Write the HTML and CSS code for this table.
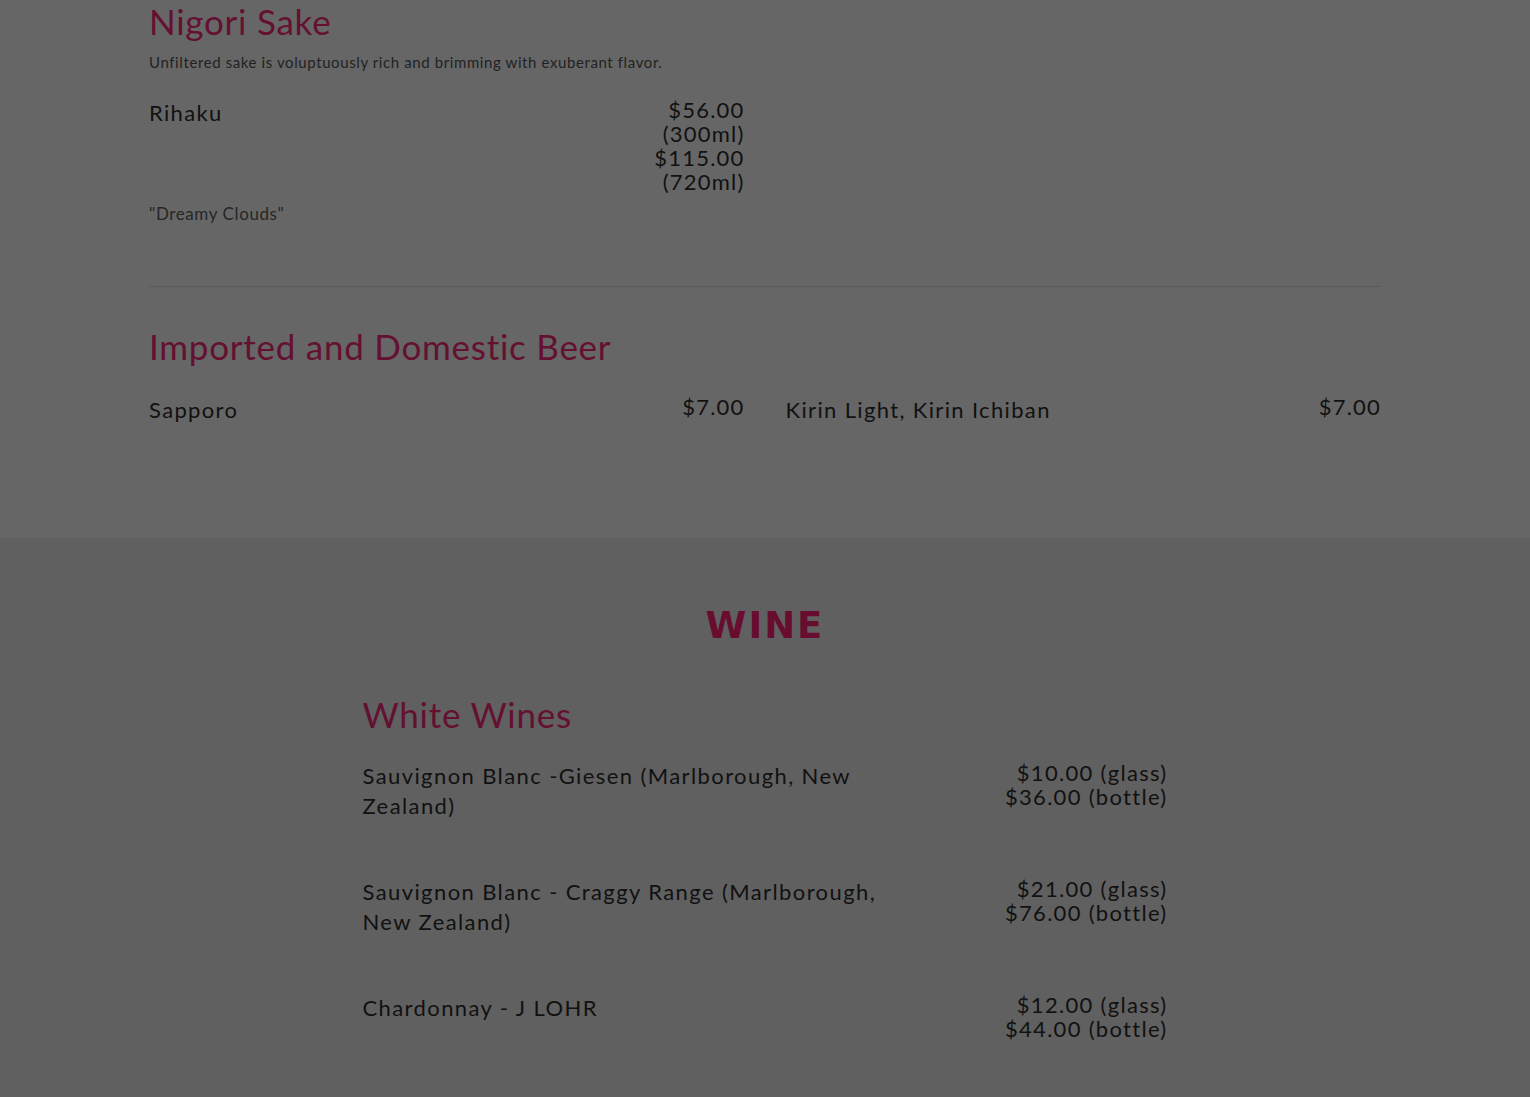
FILE: index.html
```html
<!DOCTYPE html>
<html>
<head>
<meta charset="utf-8">
<link rel="stylesheet" href="styles.css">
</head>
<body>
<section class="drinks">
  <div class="wrap">
    <div class="category nigori">
      <h2 class="cat-title">Nigori Sake</h2>
      <p class="cat-desc">Unfiltered sake is voluptuously rich and brimming with exuberant flavor.</p>
      <div class="grid">
        <div class="item">
          <div class="item-row">
            <div class="item-name">Rihaku</div>
            <div class="item-price">
              <div>$56.00</div><div>(300ml)</div><div>$115.00</div><div>(720ml)</div>
            </div>
          </div>
          <p class="item-desc">"Dreamy Clouds"</p>
        </div>
      </div>
    </div>
    <hr class="divider">
    <div class="category beer">
      <h2 class="cat-title">Imported and Domestic Beer</h2>
      <div class="grid">
        <div class="item">
          <div class="item-row">
            <div class="item-name">Sapporo</div>
            <div class="item-price"><div>$7.00</div></div>
          </div>
        </div>
        <div class="item">
          <div class="item-row">
            <div class="item-name">Kirin Light, Kirin Ichiban</div>
            <div class="item-price"><div>$7.00</div></div>
          </div>
        </div>
      </div>
    </div>
  </div>
</section>
<section class="wine">
  <h1 class="wine-title">WINE</h1>
  <div class="wine-wrap">
    <h2 class="cat-title">White Wines</h2>
    <div class="wine-item">
      <div class="wine-name">Sauvignon Blanc -Giesen (Marlborough, New Zealand)</div>
      <div class="wine-price"><div>$10.00 (glass)</div><div>$36.00 (bottle)</div></div>
    </div>
    <div class="wine-item">
      <div class="wine-name">Sauvignon Blanc - Craggy Range (Marlborough, New Zealand)</div>
      <div class="wine-price"><div>$21.00 (glass)</div><div>$76.00 (bottle)</div></div>
    </div>
    <div class="wine-item">
      <div class="wine-name">Chardonnay - J LOHR</div>
      <div class="wine-price"><div>$12.00 (glass)</div><div>$44.00 (bottle)</div></div>
    </div>
  </div>
</section>
</body>
</html>
```
FILE: styles.css
```css
html, body {
  margin: 0;
  padding: 0;
  background: #606060;
  font-family: "Lato", "Noto Sans", sans-serif;
  color: #111;
  height: 1097px;
  overflow: hidden;
}
.drinks {
  background: #666666;
  height: 540px;
  border-bottom: 1px solid #5e5e5e;
  box-sizing: border-box;
}
.wrap {
  width: 1232px;
  margin: 0 auto;
  box-sizing: border-box;
}
.cat-title {
  margin: 0;
  font-weight: 400;
  font-size: 35px;
  line-height: 44px;
  color: #641031;
  letter-spacing: 0.75px;
}
.nigori {
  margin-top: -1px;
}
.cat-desc {
  margin: 9px 0 0;
  font-size: 15px;
  line-height: 20px;
  letter-spacing: 0.6px;
  color: #222;
}
.grid {
  display: grid;
  grid-template-columns: 1fr 1fr;
  column-gap: 41px;
}
.nigori .grid { margin-top: 26px; }
.item-row {
  display: flex;
  justify-content: space-between;
  align-items: flex-start;
}
.item-name {
  font-size: 22px;
  line-height: 30px;
  letter-spacing: 1.35px;
}
.item-price {
  font-size: 22px;
  line-height: 24px;
  text-align: right;
  letter-spacing: 1.2px;
}
.item-desc {
  margin: 10px 0 0;
  font-size: 17px;
  line-height: 20px;
  letter-spacing: 0.6px;
  color: #262626;
}
.divider {
  border: 0;
  border-top: 1px solid #5b5b5b;
  margin: 62px 0 0;
}
.beer { padding-top: 37px; }
.beer .grid { margin-top: 27px; }
.wine {
  padding-top: 65px;
}
.wine-title {
  margin: 0;
  text-align: center;
  font-family: "DejaVu Sans", sans-serif;
  font-weight: 700;
  font-size: 37px;
  line-height: 44px;
  letter-spacing: 2px;
  color: #690d30;
}
.wine-wrap {
  width: 805px;
  margin: 44px auto 0;
}
.wine-wrap .cat-title { margin-bottom: 25px; }
.wine-item {
  display: flex;
  justify-content: space-between;
  align-items: flex-start;
  margin-bottom: 56px;
}
.wine-name {
  width: 545px;
  font-size: 22px;
  line-height: 30px;
  letter-spacing: 1.4px;
}
.wine-price {
  font-size: 22px;
  line-height: 24px;
  text-align: right;
  letter-spacing: 1.3px;
}
```
